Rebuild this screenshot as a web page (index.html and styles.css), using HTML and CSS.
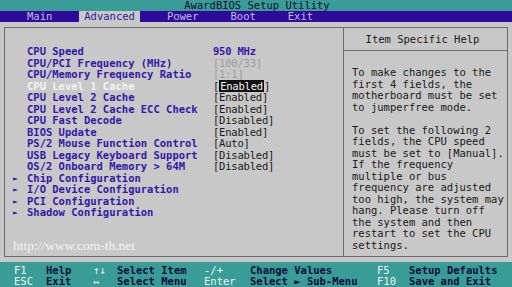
FILE: index.html
```html
<!DOCTYPE html>
<html lang="en">
<head>
  <meta charset="UTF-8" />
  <meta name="viewport" content="width=device-width, initial-scale=1.0" />
  <title>AwardBIOS Setup Utility</title>
  <link rel="stylesheet" href="styles.css">
</head>
<body>
  <div class="screen">
    <header class="title">AwardBIOS Setup Utility</header>

    <nav class="menu">
      <span class="tab">Main</span>
      <span class="tab active">Advanced</span>
      <span class="tab">Power</span>
      <span class="tab">Boot</span>
      <span class="tab">Exit</span>
    </nav>

    <main class="body">
      <div class="frame">
        <section class="items">
          <div class="row"><span></span><span class="label">CPU Speed</span><span class="value blue">950 MHz</span></div>
          <div class="row"><span></span><span class="label">CPU/PCI Frequency (MHz)</span><span class="value dim">[100/33]</span></div>
          <div class="row"><span></span><span class="label">CPU/Memory Frequency Ratio</span><span class="value dim">[1:1]</span></div>
          <div class="row"><span></span><span class="label current">CPU Level 1 Cache</span><span class="value">[<span class="selected">Enabled</span>]</span></div>
          <div class="row"><span></span><span class="label">CPU Level 2 Cache</span><span class="value">[Enabled]</span></div>
          <div class="row"><span></span><span class="label">CPU Level 2 Cache ECC Check</span><span class="value">[Enabled]</span></div>
          <div class="row"><span></span><span class="label">CPU Fast Decode</span><span class="value">[Disabled]</span></div>
          <div class="row"><span></span><span class="label">BIOS Update</span><span class="value">[Enabled]</span></div>
          <div class="row"><span></span><span class="label">PS/2 Mouse Function Control</span><span class="value">[Auto]</span></div>
          <div class="row"><span></span><span class="label">USB Legacy Keyboard Support</span><span class="value">[Disabled]</span></div>
          <div class="row"><span></span><span class="label">OS/2 Onboard Memory &gt; 64M</span><span class="value">[Disabled]</span></div>
          <div class="row"><span class="arrow">►</span><span class="label">Chip Configuration</span></div>
          <div class="row"><span class="arrow">►</span><span class="label">I/O Device Configuration</span></div>
          <div class="row"><span class="arrow">►</span><span class="label">PCI Configuration</span></div>
          <div class="row"><span class="arrow">►</span><span class="label">Shadow Configuration</span></div>

          <div class="url">http://www.com-th.net</div>
        </section>

        <aside class="help">
          <div class="help-head">Item Specific Help</div>
          <div class="help-text">
            <p>To make changes to the<br>first 4 fields, the<br>motherboard must be set<br>to jumperfree mode.</p>
            <p>To set the following 2<br>fields, the CPU speed<br>must be set to [Manual].<br>If the frequency<br>multiple or bus<br>frequency are adjusted<br>too high, the system may<br>hang. Please turn off<br>the system and then<br>restart to set the CPU<br>settings.</p>
          </div>
        </aside>
      </div>
    </main>

    <footer class="keys">
      <span class="key">F1</span><span>Help</span><span class="key">↑↓</span><span>Select Item</span>
      <span class="key">-/+</span><span>Change Values</span><span class="key">F5</span><span>Setup Defaults</span>
      <span class="key">ESC</span><span>Exit</span><span class="key">↔</span><span>Select Menu</span>
      <span class="key">Enter</span><span>Select ► Sub-Menu</span><span class="key">F10</span><span>Save and Exit</span>
    </footer>
  </div>
</body>
</html>
```

FILE: styles.css
```css
html, body {
  margin: 0;
  padding: 0;
  width: 100%;
  height: 100%;
  overflow: hidden;
  background: #c8c8c8;
}

.screen {
  width: 512px;
  height: 287px;
  display: flex;
  flex-direction: column;
  font-family: 'DejaVu Sans Mono', 'Liberation Mono', monospace;
  font-size: 10.5px;
  line-height: 11.5px;
  color: #1a1a1a;
}

.title {
  height: 11px;
  flex-shrink: 0;
  background: #3a9c96;
  color: #0e0e30;
  text-align: center;
  line-height: 11px;
  padding-left: 2px;
}

.menu {
  height: 11px;
  flex-shrink: 0;
  background: #2e0a9a;
  display: flex;
  gap: 22px;
  padding-left: 22px;
  line-height: 11px;
}

.tab {
  padding: 0 5px;
  color: #c4bce8;
}

.tab.active {
  background: #c8c8c8;
  color: #2e1a9e;
}

.body {
  flex: 1;
  min-height: 0;
  padding: 5px 4px 5px 4px;
  display: flex;
  overflow: hidden;
}

.frame {
  flex: 1;
  display: flex;
  border: 1px solid #6c6c6c;
}

.items {
  width: 338px;
  padding: 18px 0 3px 8px;
  display: flex;
  flex-direction: column;
  box-sizing: border-box;
}

.row {
  display: grid;
  grid-template-columns: 14px 186px auto;
  height: 11.5px;
}

.label {
  color: #3418a8;
  font-weight: bold;
  white-space: nowrap;
}

.label.current {
  color: #f2f2f2;
}

.arrow {
  color: #3418a8;
  font-size: 8px;
}

.value {
  white-space: nowrap;
  letter-spacing: -0.2px;
}

.value.blue {
  color: #3418a8;
  font-weight: bold;
}

.value.dim {
  color: #9c9c9c;
}

.selected {
  background: #101010;
  color: #f4f4f4;
  padding: 0 1px;
}

.url {
  margin-top: auto;
  font-family: 'Liberation Serif', serif;
  font-size: 13.5px;
  line-height: 15px;
  color: #f4f4f4;
}

.help {
  flex: 1;
  border-left: 1px solid #6c6c6c;
  display: flex;
  flex-direction: column;
}

.help-head {
  height: 22px;
  line-height: 22px;
  text-align: center;
  border-bottom: 1px solid #6c6c6c;
  padding-right: 6px;
}

.help-text {
  padding: 16px 0 0 8px;
}

.help-text p {
  margin: 0 0 11.5px;
  white-space: nowrap;
}

.help-text p:last-child {
  margin-bottom: 0;
}

.keys {
  height: 25px;
  flex-shrink: 0;
  box-sizing: border-box;
  background: #3a9c96;
  padding: 3px 0 0 14px;
  display: grid;
  grid-template-columns: 32px 47px 24px 87px 46px 127px 32px auto;
  line-height: 11px;
  color: #0e0e3a;
  font-weight: bold;
  white-space: nowrap;
}

.keys .key {
  color: #eef4f2;
  font-weight: normal;
}
```
